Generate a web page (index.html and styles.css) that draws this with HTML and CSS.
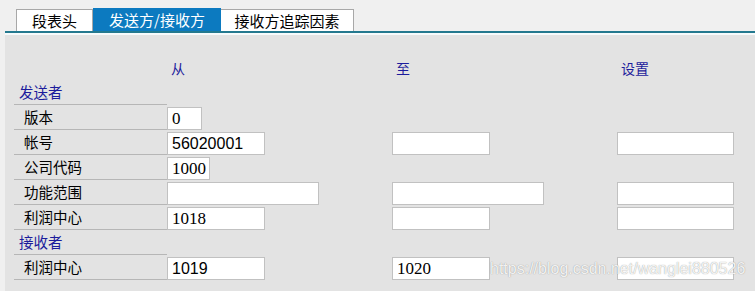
FILE: index.html
```html
<!DOCTYPE html>
<html lang="zh">
<head>
<meta charset="utf-8">
<link rel="stylesheet" href="styles.css">
</head>
<body>
<div class="tabs">
  <div class="tab">段表头</div>
  <div class="tab active">发送方/接收方</div>
  <div class="tab">接收方追踪因素</div>
</div>
<div class="wrap">
  <div class="rule"></div>
  <div class="panel">
    <div class="row head">
      <div class="lbl"></div>
      <div class="col"><span class="h">从</span></div>
      <div class="col"><span class="h">至</span></div>
      <div class="col"><span class="h">设置</span></div>
    </div>
    <div class="row">
      <div class="lbl sec">发送者</div>
    </div>
    <div class="row">
      <div class="lbl">版本</div>
      <div class="col"><div class="in serif w35">0</div></div>
    </div>
    <div class="row">
      <div class="lbl">帐号</div>
      <div class="col"><div class="in sans w97">56020001</div></div>
      <div class="col"><div class="in w97"></div></div>
      <div class="col"><div class="in w116"></div></div>
    </div>
    <div class="row">
      <div class="lbl">公司代码</div>
      <div class="col"><div class="in serif w43">1000</div></div>
    </div>
    <div class="row">
      <div class="lbl">功能范围</div>
      <div class="col"><div class="in w151"></div></div>
      <div class="col"><div class="in w151"></div></div>
      <div class="col"><div class="in w116"></div></div>
    </div>
    <div class="row">
      <div class="lbl">利润中心</div>
      <div class="col"><div class="in serif w97">1018</div></div>
      <div class="col"><div class="in w97"></div></div>
      <div class="col"><div class="in w116"></div></div>
    </div>
    <div class="row">
      <div class="lbl sec">接收者</div>
    </div>
    <div class="row">
      <div class="lbl">利润中心</div>
      <div class="col"><div class="in sans w97">1019</div></div>
      <div class="col"><div class="in serif w97">1020</div></div>
      <div class="col"><div class="in w116"></div></div>
    </div>
    <div class="watermark">https://blog.csdn.net/wanglei880526</div>
  </div>
</div>
</body>
</html>
```

FILE: styles.css
```css
html, body {
  margin: 0;
  padding: 0;
  background: #f0f0f0;
  height: 291px;
  overflow: hidden;
}
body {
  font-family: "Noto Sans CJK SC", "Noto Sans", sans-serif;
}
.tabs {
  display: flex;
  align-items: flex-end;
  padding: 8px 0 0 16px;
  height: 23px;
  box-sizing: content-box;
}
.tab {
  height: 22px;
  box-sizing: border-box;
  border: 1px solid #a8a8a8;
  border-bottom: none;
  background: #ffffff;
  color: #000;
  font-size: 15px;
  line-height: 21px;
  padding: 0 14px;
  white-space: nowrap;
}
.tabs .tab:first-child { width: 77px; text-align: center; padding: 0; }
.tab.active {
  height: 23px;
  border: none;
  background: #0c7ac0;
  color: #ffffff;
  width: 128px;
  text-align: center;
  padding: 0;
  line-height: 23px;
}
.tabs .tab:last-child { width: 133px; text-align: center; padding: 0; border-left: none; }
.wrap {
  margin-left: 5px;
}
.rule {
  height: 2px;
  background: #24798f;
  border-bottom: 2px solid #f6fbfc;
}
.panel {
  position: relative;
  background: #e3e3e3;
  height: 256px;
  padding: 21px 0 0 9px;
  box-sizing: border-box;
  overflow: hidden;
}
.row {
  display: flex;
  height: 25px;
}
.row.head {
  height: 24px;
}
.lbl {
  flex: none;
  width: 153px;
  box-sizing: border-box;
  border-bottom: 1px solid #b6b6b6;
  font-size: 14.5px;
  line-height: 24px;
  padding-left: 10px;
  color: #000;
}
.head .lbl { border-bottom: none; }
.lbl.sec {
  padding-left: 5px;
  color: #1c1c9c;
  line-height: 23px;
}
.col {
  flex: none;
  width: 225px;
  padding-top: 2px;
}
.h {
  display: block;
  padding-left: 4px;
  color: #1c1c9c;
  font-size: 14px;
  line-height: 20px;
}
.in {
  height: 23px;
  box-sizing: border-box;
  background: #ffffff;
  border: 1px solid #c1c1c1;
  padding-left: 4px;
  font-size: 16px;
  line-height: 21px;
  color: #000;
}
.serif { font-family: "Liberation Serif", serif; font-size: 17px; }
.sans { font-family: "Liberation Sans", Arial, sans-serif; }
.w35 { width: 35px; }
.w43 { width: 43px; }
.w97 { width: 98px; }
.w116 { width: 117px; }
.w151 { width: 152px; }
.watermark {
  position: absolute;
  left: 485px;
  top: 225px;
  font-family: "Liberation Sans", Arial, sans-serif;
  font-size: 16px;
  color: rgba(255, 255, 255, 0.9);
  text-shadow: 0 0 1px rgba(110, 110, 110, 0.8);
  white-space: nowrap;
}
```
